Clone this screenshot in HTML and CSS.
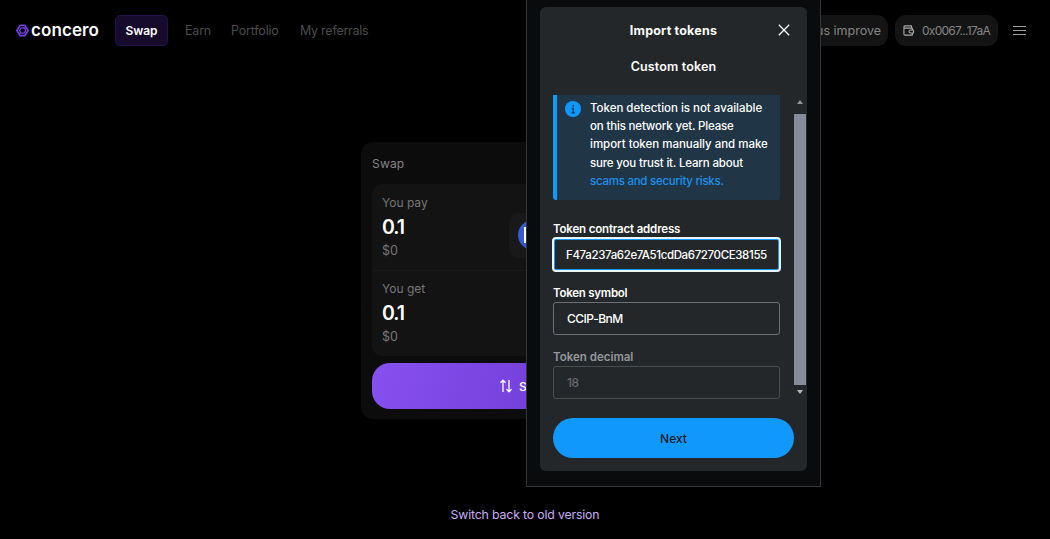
FILE: index.html
```html
<!DOCTYPE html>
<html lang="en">
<head>
<meta charset="utf-8">
<title>Concero – Swap</title>
<link rel="stylesheet" href="styles.css">
</head>
<body>
<div class="app">
  <header class="header">
    <a class="logo">
      <svg class="logo-mark" viewBox="0 0 24 24" fill="none" stroke="#7442e0" stroke-linejoin="round">
        <path d="M5 7l2.500-4.500h9L19 7M19 7l3.500 5L19 17l-2.500 4.500h-9L5 17l-3.500-5L5 7" stroke-width="3"/>
        <path d="M17 7H9.500L6.500 12l3 5M7 17h8l3-5-2-4" stroke-width="2.400"/>
      </svg>
      <span class="logo-text">concero</span>
    </a>
    <nav class="nav">
      <a class="tab tab-active">Swap</a>
      <a class="tab tab-earn">Earn</a>
      <a class="tab tab-portfolio">Portfolio</a>
      <a class="tab tab-referrals">My referrals</a>
    </nav>
    <div class="actions">
      <button class="pill pill-help"><span>Help us improve</span></button>
      <button class="pill pill-wallet">
        <svg class="wallet-icon" viewBox="0 0 12 12" fill="none" stroke="#a9a9a9" stroke-width="1.200" stroke-linejoin="round">
          <path d="M9.300 3.300V1H2.200a1.200 1.200 0 0 0 0 2.400h8v2M1 2.200v7.600a1.200 1.200 0 0 0 1.200 1.200h8V8.800"/>
          <path d="M11.400 5.400H8.300a1.700 1.700 0 0 0 0 3.400h3.100z"/>
        </svg>
        <span>0x0067...17aA</span>
      </button>
      <svg class="menu-icon" viewBox="0 0 13 11" stroke="#a0a0a0" stroke-width="1"><path d="M0 1.500h13M0 5.500h13M0 9.500h13"/></svg>
    </div>
  </header>

  <main class="main">
    <section class="swap-card">
      <h2 class="swap-title">Swap</h2>
      <div class="amounts">
        <div class="amount">
          <div class="amount-info">
            <span class="amount-label">You pay</span>
            <strong class="amount-value">0.1</strong>
            <span class="amount-usd">$0</span>
          </div>
          <div class="token">
            <svg class="token-icon" viewBox="0 0 30 30"><circle cx="15" cy="15" r="15" fill="#375bd2"/><rect x="7" y="8" width="14" height="14" fill="none" stroke="#fff" stroke-width="2"/></svg>
          </div>
        </div>
        <div class="amount">
          <div class="amount-info">
            <span class="amount-label">You get</span>
            <strong class="amount-value">0.1</strong>
            <span class="amount-usd">$0</span>
          </div>
        </div>
      </div>
      <button class="swap-button">
        <svg class="swap-icon" viewBox="0 0 13 14" fill="none" stroke="#fff" stroke-width="1.300"><path d="M3.500 13V1.200M1 3.700l2.500-2.500L6 3.700M9.500 1v11.800M7 10.300l2.500 2.500 2.500-2.500"/></svg>
        <span>Swap</span>
      </button>
    </section>
  </main>
  <footer class="footer"><a class="old-version">Switch back to old version</a></footer>
</div>

<aside class="wallet-window">
  <div class="modal">
    <div class="modal-header">
      <h1 class="modal-title">Import tokens</h1>
      <svg class="close-icon" viewBox="0 0 12 12" stroke="#fff" stroke-width="1.300"><path d="M.8.8l10.400 10.400M11.200.8L.8 11.200"/></svg>
    </div>
    <h2 class="modal-subtitle">Custom token</h2>
    <div class="modal-body">
      <div class="form">
        <div class="notice">
          <svg class="info-icon" viewBox="0 0 16 16"><circle cx="8" cy="8" r="8" fill="#1098fc"/><path d="M8.200 4v1.700M6.700 7.500h1.500V12M6.500 11.800h3.400" stroke="#173b55" stroke-width="1.300" fill="none"/></svg>
          <p class="notice-text">
            <span>Token detection is not available</span>
            <span class="tight">on this network yet. Please</span>
            <span>import token manually and make</span>
            <span class="tight">sure you trust it. Learn about</span>
            <a class="risks-link">scams and security risks.</a>
          </p>
        </div>
        <label class="field">
          <span class="field-label tight">Token contract address</span>
          <span class="field-input field-focus">F47a237a62e7A51cdDa67270CE38155</span>
        </label>
        <label class="field">
          <span class="field-label label-symbol">Token symbol</span>
          <span class="field-input field-symbol">CCIP-BnM</span>
        </label>
        <label class="field field-disabled">
          <span class="field-label">Token decimal</span>
          <span class="field-input">18</span>
        </label>
      </div>
      <div class="scrollbar">
        <i class="arrow-up"></i>
        <i class="thumb"></i>
        <i class="arrow-down"></i>
      </div>
    </div>
    <button class="next-button">Next</button>
  </div>
</aside>
</body>
</html>
```

FILE: styles.css
```css
* { box-sizing: border-box; }
body {
  margin: 0;
  background: #000;
  color: #fff;
  font-family: Inter, "Liberation Sans", sans-serif;
  font-size: 12.5px;
  overflow: hidden;
}
h1, h2, p { margin: 0; }
button { border: 0; font: inherit; color: inherit; }
svg { display: block; flex: none; }
span, a, strong { white-space: nowrap; }
.tight { letter-spacing: -0.17px; }

.app { width: 1050px; height: 539px; display: flex; flex-direction: column; }

.header { height: 61px; padding: 0 24px 0 16px; display: flex; align-items: center; }
.logo { display: flex; align-items: center; gap: 2px; width: 99px; }
.logo-mark { width: 13px; height: 13px; }
.logo-text { font-size: 17px; font-weight: 600; line-height: 20px; margin-top: -2px; letter-spacing: 0.1px; }
.nav { display: flex; align-items: center; gap: 20px; }
.tab { color: #4b4b4b; }
.tab-active {
  width: 53px; height: 31px; margin-right: -3px;
  display: flex; align-items: center; justify-content: center;
  background: #160b2d; border: 1px solid #24144a; border-radius: 5px;
  color: #fff; font-weight: 600; font-size: 12px;
}
.tab-earn { width: 26px; letter-spacing: -0.2px; }
.tab-portfolio { width: 49px; letter-spacing: -0.2px; }
.tab-referrals { letter-spacing: -0.26px; }
.actions { margin-left: auto; display: flex; align-items: center; }
.pill { height: 31px; border-radius: 11px; background: #141414; color: #858585; display: flex; align-items: center; padding: 0 7px; }
.pill-help { margin-right: 7px; width: 116px; justify-content: flex-end; }
.pill-wallet { width: 103px; gap: 8px; padding: 0 8px; margin-right: 15px; font-size: 12px; letter-spacing: -0.73px; }
.wallet-icon { width: 11px; height: 11px; }
.menu-icon { width: 13px; height: 11px; }

.main { flex: 1; display: flex; justify-content: center; align-items: flex-start; padding-top: 81px; }
.swap-card { width: 328px; height: 277px; padding: 0 11px 10px; background: #0c0c0c; border-radius: 12px; display: flex; flex-direction: column; }
.swap-title { height: 42px; line-height: 43px; font-size: 12px; font-weight: 400; color: #858585; letter-spacing: .2px; }
.amounts { height: 172px; background: #131313; border-radius: 10px; }
.amount { height: 86px; padding: 10px 10px 0; display: flex; justify-content: space-between; }
.amount + .amount { border-top: 1px solid #191919; padding-top: 9px; }
.amount-info { display: flex; flex-direction: column; }
.amount-label { font-size: 12px; line-height: 18px; color: #777; }
.amount-value { font-size: 19.5px; line-height: 30px; font-weight: 600; letter-spacing: -1px; }
.amount-usd { font-size: 12.5px; line-height: 18px; color: #777; }
.token { width: 159px; height: 45px; margin-top: 19px; padding: 7px 9px; border-radius: 10px; background: #191919; }
.token-icon { width: 30px; height: 30px; }
.swap-button { height: 46px; margin-top: 7px; border-radius: 18px; background: linear-gradient(110deg, #8750f0, #6532c9); display: flex; align-items: center; justify-content: center; gap: 6px; font-weight: 500; font-size: 12px; }
.swap-icon { width: 14px; height: 14px; }
.footer { height: 50px; text-align: center; line-height: 51px; }
.old-version { color: #c5aff4; font-size: 12.3px; letter-spacing: -0.16px; }

.wallet-window {
  position: absolute; left: 526px; top: 0; width: 295px; height: 487px;
  padding: 7px 13px 0;
  background: #090b0c; border: 1px solid #333536; border-top: 0;
}
.modal { height: 464px; padding: 0 13px; background: #24272a; border-radius: 6px; display: flex; flex-direction: column; }
.modal-header { height: 46px; display: grid; grid-template-columns: 1fr auto 1fr; align-items: center; }
.modal-title { grid-column: 2; font-size: 12.5px; font-weight: 700; letter-spacing: .2px; }
.close-icon { justify-self: end; width: 12px; height: 12px; margin-right: 4px; }
.modal-subtitle { height: 42px; line-height: 27px; text-align: center; font-size: 12.5px; font-weight: 600; letter-spacing: .15px; }
.modal-body { display: flex; height: 304px; margin-right: -13px; }
.form { width: 227px; }
.notice { height: 105px; border-left: 4px solid #1098fc; border-radius: 0 0 3px 3px; background: #203646; display: flex; gap: 9px; padding: 6px 0 0 8px; }
.info-icon { width: 16px; height: 16px; }
.notice-text { display: flex; flex-direction: column; margin-top: -2px; font-size: 11.5px; font-weight: 500; line-height: 18.2px; letter-spacing: -0.02px; }
.risks-link { color: #1b91ed; letter-spacing: -0.26px; }
.field { height: 64px; display: flex; flex-direction: column; }
.notice + .field { margin-top: 20px; }
.field-label { height: 18px; line-height: 18px; font-size: 11.5px; font-weight: 600; }
.label-symbol { letter-spacing: -0.25px; }
.field-input { height: 33px; line-height: 31px; border: 1px solid #6d7074; border-radius: 3px; padding-left: 13px; font-size: 12px; font-weight: 500; }
.field-focus { border: 2px solid #1098fc; outline: 2px solid #e8f5ff; outline-offset: -1px; padding-left: 11px; line-height: 30px; font-size: 11.5px; letter-spacing: -0.37px; }
.field-symbol { letter-spacing: -0.5px; }
.field-disabled { color: #95989b; }
.field-disabled .field-input { border-color: #4a4d50; color: #686b6e; letter-spacing: -0.6px; }
.scrollbar { width: 12px; margin-left: 14px; display: flex; flex-direction: column; align-items: center; }
.arrow-up { border: 3px solid transparent; border-top: 0; border-bottom: 4px solid #909398; margin: 5px 0 10px; }
.thumb { width: 12px; height: 271px; background: #858b9a; }
.arrow-down { border: 3px solid transparent; border-bottom: 0; border-top: 4px solid #b5b7ba; margin-top: 5px; }
.next-button { width: 241px; height: 40px; margin-top: 19px; border-radius: 20px; background: #1098fc; color: #101c26; font-size: 12px; font-weight: 500; }
```
